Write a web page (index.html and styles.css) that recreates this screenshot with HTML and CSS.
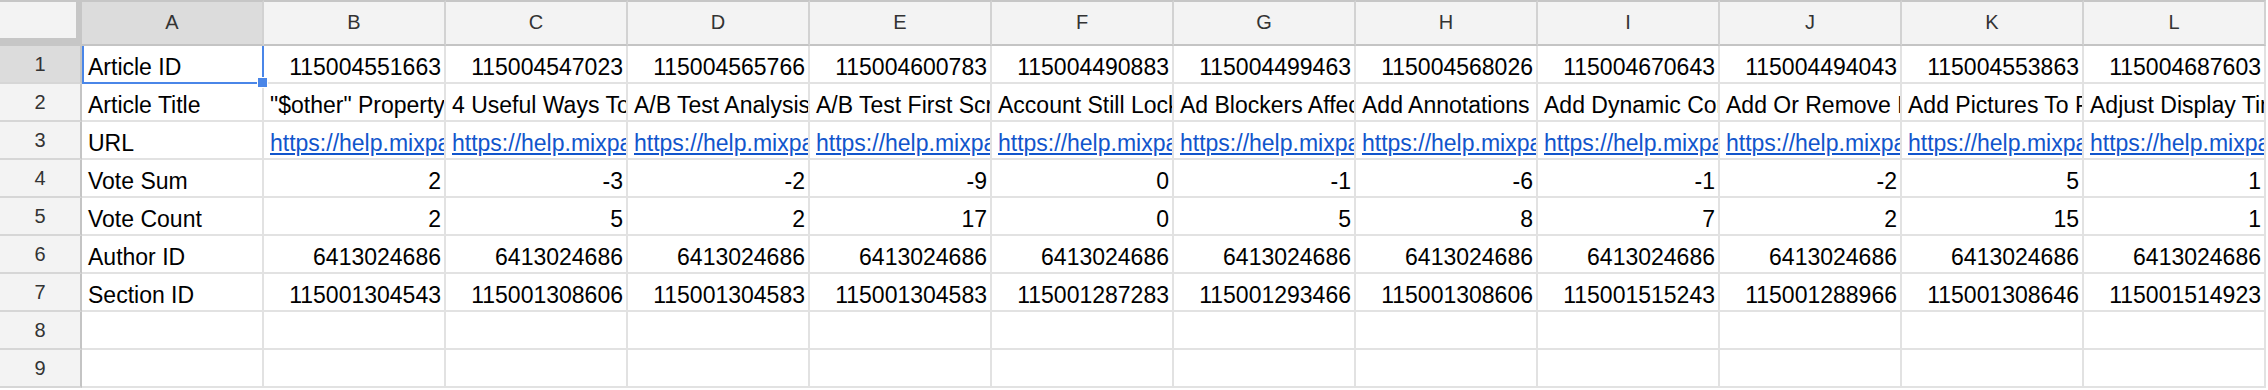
FILE: index.html
```html
<!DOCTYPE html>
<html lang="en">
<head>
  <meta charset="UTF-8">
  <meta name="viewport" content="width=device-width, initial-scale=1.0">
  <title>Help Center Articles</title>
  <link rel="stylesheet" href="styles.css">
</head>
<body>
  <div class="sheet" id="sheet">
    <!-- cells are rendered by the script below -->
  </div>

  <script>
    const cols = ["A", "B", "C", "D", "E", "F", "G", "H", "I", "J", "K", "L"];

    const ids = ["115004551663", "115004547023", "115004565766", "115004600783", "115004490883", "115004499463",
      "115004568026", "115004670643", "115004494043", "115004553863", "115004687603"];

    const titles = ["\"$other\" Property", "4 Useful Ways To Use Funnels", "A/B Test Analysis", "A/B Test First Screen",
      "Account Still Locked", "Ad Blockers Affect Data", "Add Annotations", "Add Dynamic Content",
      "Add Or Remove People", "Add Pictures To Profiles", "Adjust Display Time"];

    const rows = [
      { label: "Article ID", type: "num", values: ids },
      { label: "Article Title", type: "text", values: titles },
      { label: "URL", type: "link", values: ids.map(id => "https://help.mixpanel.com/hc/en-us/articles/" + id) },
      { label: "Vote Sum", type: "num", values: [2, -3, -2, -9, 0, -1, -6, -1, -2, 5, 1] },
      { label: "Vote Count", type: "num", values: [2, 5, 2, 17, 0, 5, 8, 7, 2, 15, 1] },
      { label: "Author ID", type: "num", values: Array(11).fill("6413024686") },
      { label: "Section ID", type: "num", values: ["115001304543", "115001308606", "115001304583", "115001304583",
        "115001287283", "115001293466", "115001308606", "115001515243", "115001288966", "115001308646", "115001514923"] },
      { label: "", type: "text", values: [] },
      { label: "", type: "text", values: [] }
    ];

    function renderSheet() {
      let html = '<div class="corner"></div>';

      cols.forEach((col, i) => {
        html += `<div class="col-head${i === 0 ? " active" : ""}">${col}</div>`;
      });

      rows.forEach((row, r) => {
        html += `<div class="row-head${r === 0 ? " active" : ""}">${r + 1}</div>`;

        if (r === 0) {
          // celula A1 selecionada
          html += `<div class="cell selected">${row.label}<div class="selection"><span class="handle"></span></div></div>`;
        } else {
          html += `<div class="cell">${row.label}</div>`;
        }

        for (let i = 0; i < 11; i++) {
          const value = row.values[i];
          if (value === undefined) {
            html += '<div class="cell"></div>';
          } else if (row.type === "num") {
            html += `<div class="cell num">${value}</div>`;
          } else if (row.type === "link") {
            html += `<div class="cell"><a class="link" href="${value}">${value}</a></div>`;
          } else {
            html += `<div class="cell">${value}</div>`;
          }
        }
      });

      document.getElementById("sheet").innerHTML = html;
    }

    renderSheet();
  </script>
</body>
</html>
```

FILE: styles.css
```css
body {
  margin: 0;
  padding: 0;
  background-color: #fff;
  font-family: "Liberation Sans", Arial, sans-serif;
}

.sheet {
  display: grid;
  grid-template-columns: 82px repeat(12, 182px);
  grid-template-rows: 46px repeat(9, 38px);
}

.corner {
  box-sizing: border-box;
  background-color: #f3f3f3;
  border-top: 2px solid #c6c6c6;
  border-right: 6px solid #c6c6c6;
  border-bottom: 8px solid #c6c6c6;
}

.col-head {
  box-sizing: border-box;
  display: flex;
  align-items: center;
  justify-content: center;
  padding-bottom: 2px;
  background-color: #f3f3f3;
  border-top: 2px solid #c6c6c6;
  border-right: 2px solid #d2d2d2;
  border-bottom: 2px solid #c4c4c4;
  font-size: 20px;
  color: #333;
}

.row-head {
  box-sizing: border-box;
  display: flex;
  align-items: center;
  justify-content: center;
  background-color: #f3f3f3;
  border-right: 2px solid #c4c4c4;
  border-bottom: 2px solid #d6d6d6;
  font-size: 20px;
  color: #333;
}

.col-head.active,
.row-head.active {
  background-color: #dcdcdc;
}

.cell {
  box-sizing: border-box;
  display: flex;
  align-items: flex-end;
  padding: 0 3px 2px 6px;
  border-right: 2px solid #e2e2e2;
  border-bottom: 2px solid #e2e2e2;
  overflow: hidden;
  white-space: nowrap;
  font-size: 23px;
  line-height: 26px;
  color: #000;
}

.cell.num {
  justify-content: flex-end;
}

.link {
  color: #1155cc;
  text-decoration: underline;
}

.cell.selected {
  position: relative;
  overflow: visible;
}

.selection {
  position: absolute;
  left: 0;
  top: 0;
  right: -2px;
  bottom: -2px;
  border: 2px solid #4a86e8;
  border-top: none;
}

.handle {
  position: absolute;
  right: -6px;
  bottom: -6px;
  width: 9px;
  height: 9px;
  background-color: #4a86e8;
  border: 1px solid #fff;
}
```
